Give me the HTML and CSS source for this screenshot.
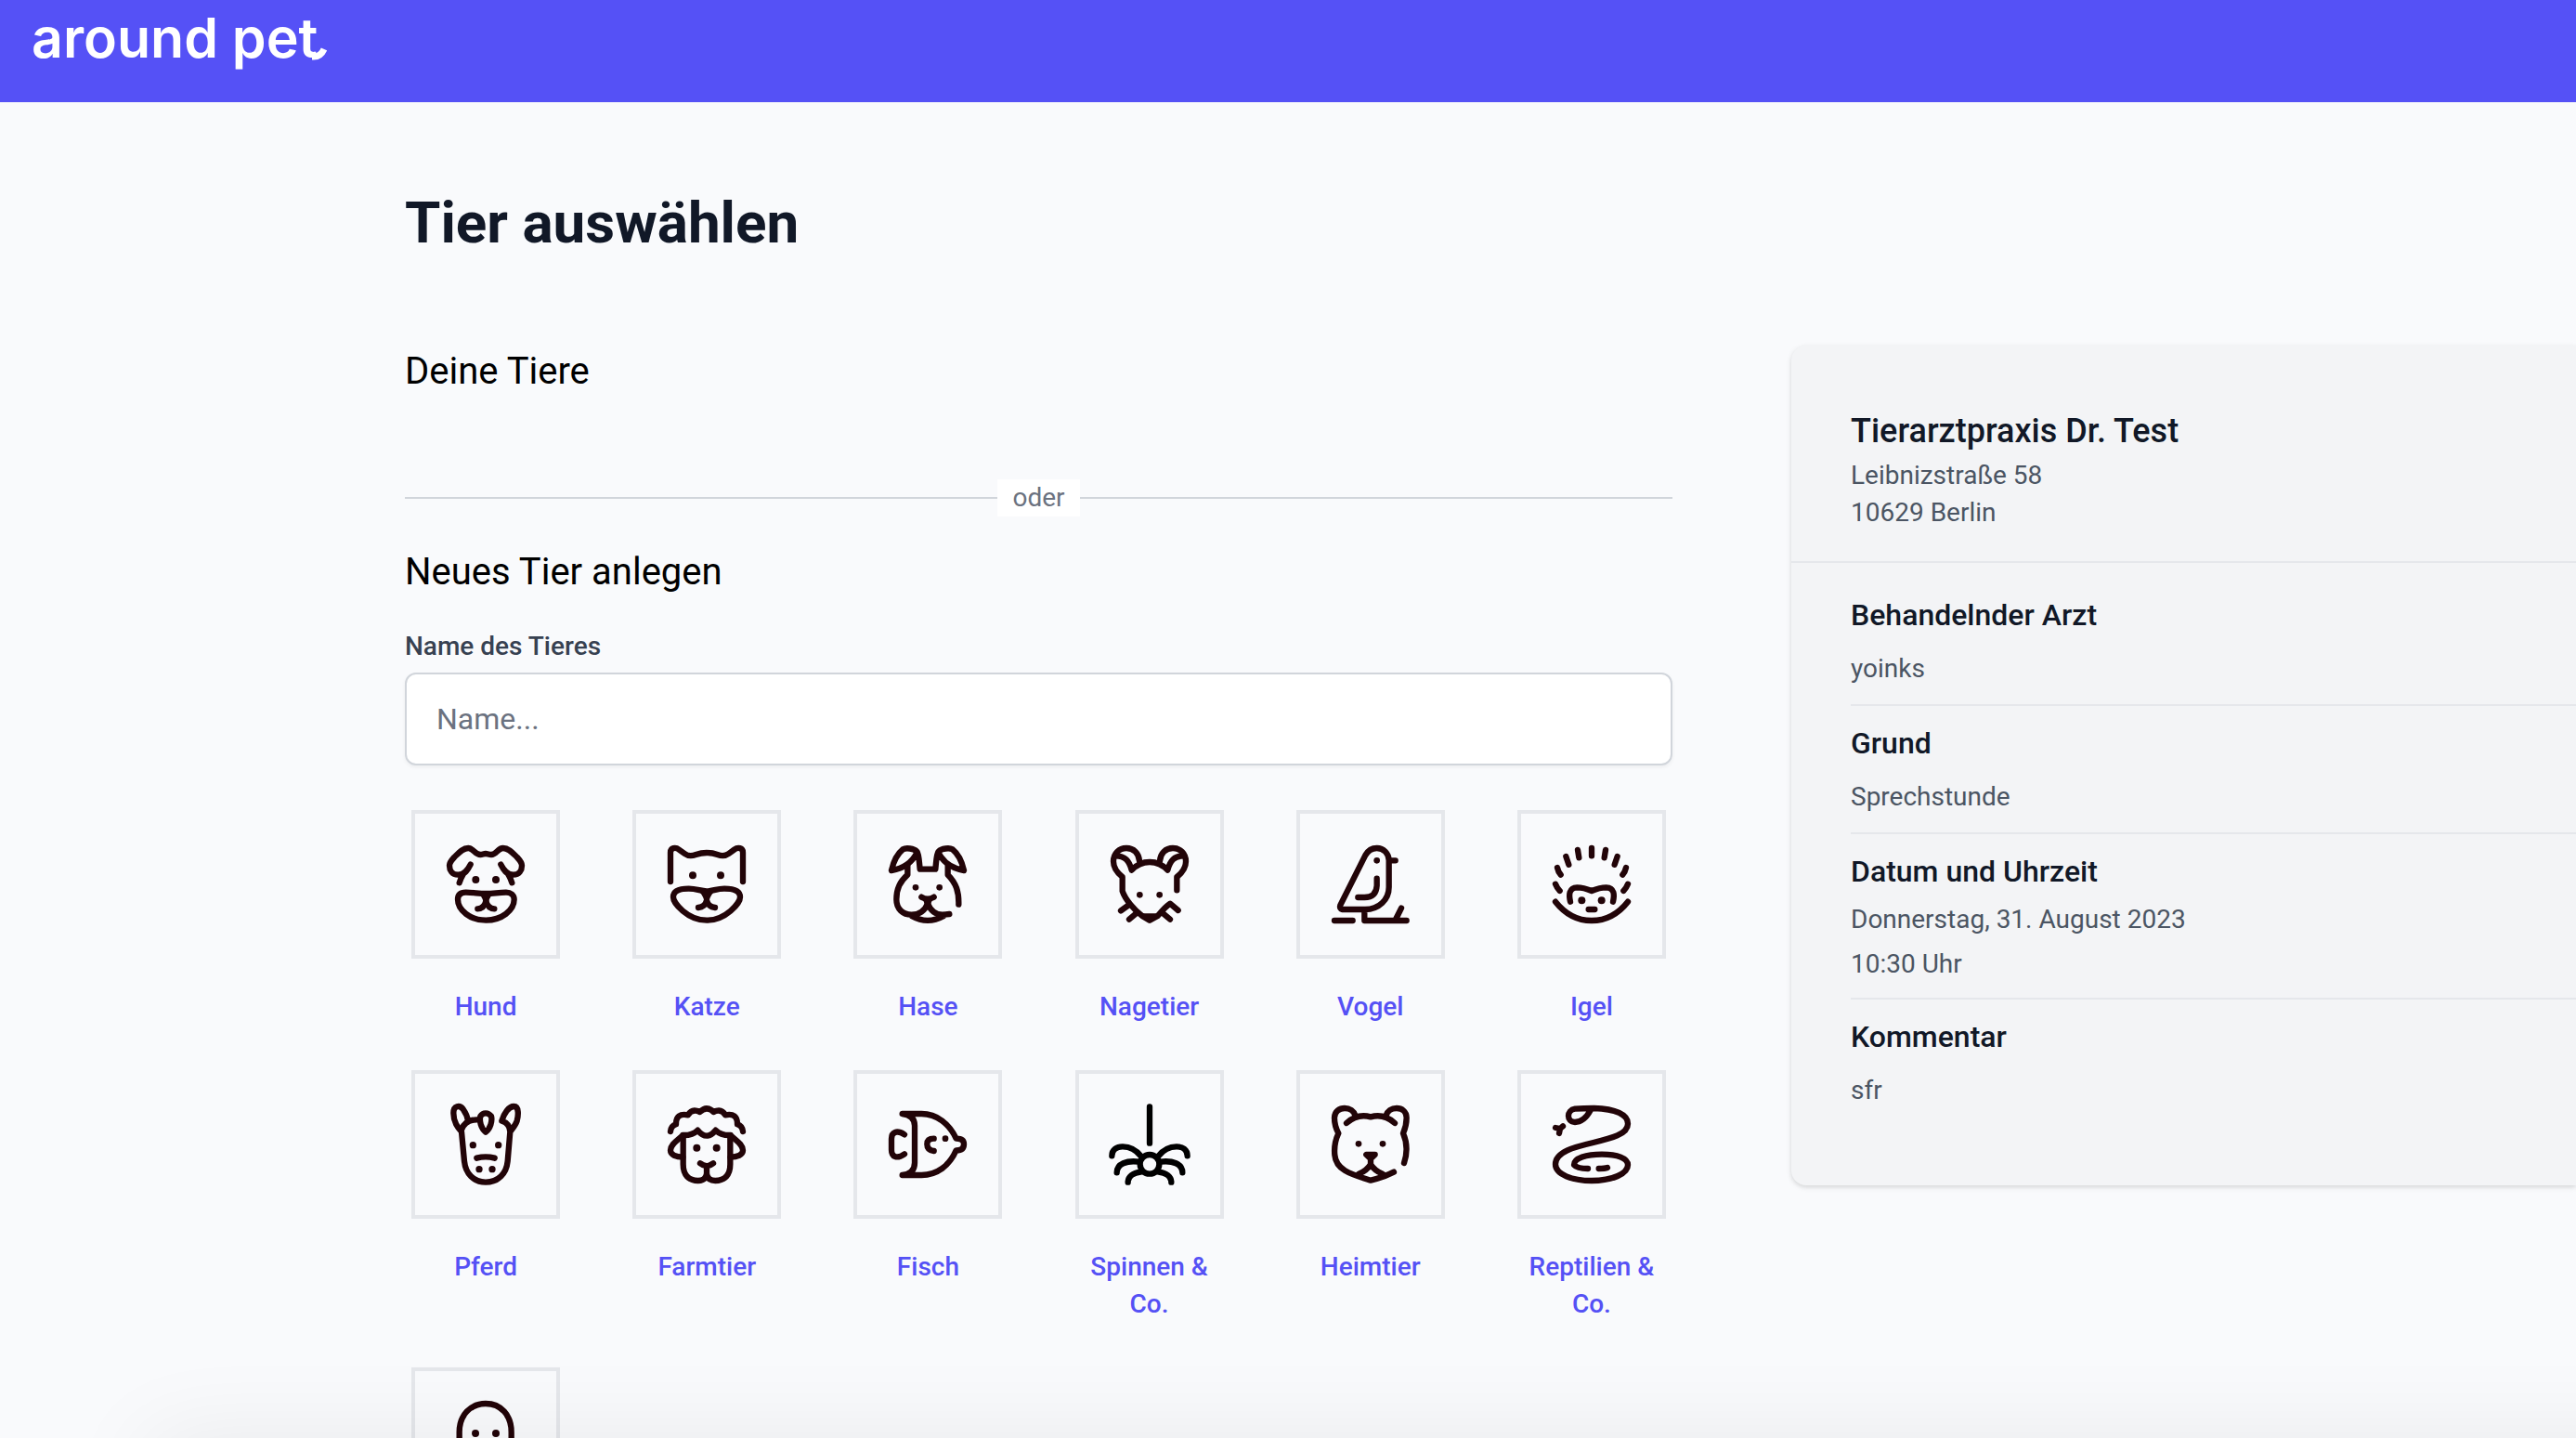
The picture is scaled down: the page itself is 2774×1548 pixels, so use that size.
FILE: index.html
```html
<!DOCTYPE html>
<html lang="de">
<head>
<meta charset="utf-8">
<meta name="viewport" content="width=device-width, initial-scale=1">
<title>Tier auswählen – around pet</title>
<link rel="stylesheet" href="styles.css">
</head>
<body>
<header class="topbar">
  <a class="logo" href="#">around pet<svg class="logo-tail" viewBox="0 0 16 24" aria-hidden="true"><path d="M0 19 Q9 20 13 11"/></svg></a>
</header>
<main class="page">
  <h1 class="page-title">Tier auswählen</h1>
  <div class="columns">
    <form class="selection">
      <h2 class="section-title">Deine Tiere</h2>
      <div class="divider"><span class="divider-text">oder</span></div>
      <h2 class="section-title">Neues Tier anlegen</h2>
      <label class="field-label" for="pet-name">Name des Tieres</label>
      <input class="field-input" id="pet-name" type="text" placeholder="Name...">
      <div class="animals">
        <button class="animal" type="button">
          <span class="tile"><svg viewBox="51 48 456 456" aria-hidden="true">
            <path d="M230 212C222 228 212 245 190 245C170 245 162 230 162 215C162 205 168 199 178 188C192 174 205 159 223 159C240 159 244 180 262 180C269 180 272 177 279 177C286 177 289 180 297 180C314 180 318 159 335 159C353 159 366 174 380 188C390 199 396 205 396 215C396 230 388 245 368 245C346 245 336 228 328 212M194 271Q198 258 205 246M364 271Q360 258 353 246"/>
            <path d="M189 325C189 308 200 302 215 302C240 302 255 306 280 306C305 306 320 302 345 302C360 302 371 310 371 325C371 360 330 392 280 392C230 392 189 360 189 325ZM253 355Q274 354 280 330Q286 354 307 355"/>
            <path class="solid" d="M250 304H310Q292 312 288 335H272Q268 312 250 304Z"/>
            <circle class="solid" cx="247" cy="261" r="12"/><circle class="solid" cx="312" cy="261" r="12"/>
          </svg></span>
          <span class="animal-name">Hund</span>
        </button>
        <button class="animal" type="button">
          <span class="tile"><svg viewBox="765 48 456 456" aria-hidden="true">
            <path d="M876 267V173C876 158 892 155 904 164L922 177Q937 188 958 180Q993 168 1028 180Q1049 188 1064 177L1082 164C1094 155 1110 158 1110 173V267"/>
            <path d="M885 317C885 300 900 290 935 290C960 290 975 298 993 298C1011 298 1026 290 1050 290C1085 290 1101 300 1101 317C1101 336 1055 392 993 392C931 392 885 336 885 317ZM966 351Q988 349 993 328Q998 349 1020 351"/>
            <path class="solid" d="M962 293H1024Q1006 308 1001 328H985Q980 308 962 293Z"/>
            <circle class="solid" cx="948" cy="247" r="12"/><circle class="solid" cx="1038" cy="247" r="12"/>
          </svg></span>
          <span class="animal-name">Katze</span>
        </button>
        <button class="animal" type="button">
          <span class="tile"><svg viewBox="42 48 456 456" aria-hidden="true">
            <path d="M153 231C160 200 175 175 190 163C200 157 225 160 235 170C242 178 242 200 245 227H295C298 200 298 178 305 170C315 160 340 157 350 163C365 175 380 200 387 231M153 231C190 225 220 205 236 172M387 231C350 225 320 205 304 172"/>
            <path d="M370 341C371 300 362 272 335 245V214M205 214V245C180 268 169 290 169 325C169 356 190 374 218 374C248 374 262 358 270 338C278 358 292 374 318 374L340 372M218 378Q270 407 322 378M250 317Q270 329 290 317"/>
            <path class="solid" d="M252 318H288L278 345H262Z"/>
            <circle class="solid" cx="231" cy="286" r="10"/><circle class="solid" cx="308" cy="286" r="10"/>
          </svg></span>
          <span class="animal-name">Hase</span>
        </button>
        <button class="animal" type="button">
          <span class="tile"><svg viewBox="756 48 456 456" aria-hidden="true">
            <path d="M951 200C949 175 932 159 909 159C885 159 867 177 867 202C867 220 878 238 896 252V298C905 325 935 360 960 378L984 392L1010 378C1025 360 1038 345 1050 338L1076 360M1072 295V252C1090 238 1101 220 1101 202C1101 177 1083 159 1059 159C1036 159 1019 175 1017 200"/>
            <path d="M874 184C905 184 918 200 926 230Q950 204 984 204Q1018 204 1042 230C1050 200 1063 184 1094 184M916 343L891 361M943 368L918 389M1025 368L1050 389"/>
            <path class="solid" d="M946 370H1022L984 401Z"/>
            <circle class="solid" cx="952" cy="310" r="10"/><circle class="solid" cx="1016" cy="310" r="10"/>
          </svg></span>
          <span class="animal-name">Nagetier</span>
        </button>
        <button class="animal" type="button">
          <span class="tile"><svg viewBox="60 48 456 456" aria-hidden="true">
            <path d="M270 357H196Q186 354 190 343L271 182C280 166 292 159 308 159C330 159 347 177 347 199V285C347 325 315 357 270 357ZM347 199H368M308 257V280Q306 318 268 318H247M268 357V393H404M171 393H230M387 353L370 387"/>
            <circle class="solid" cx="308" cy="199" r="10"/>
          </svg></span>
          <span class="animal-name">Vogel</span>
        </button>
        <button class="animal" type="button">
          <span class="tile"><svg viewBox="774 48 456 456" aria-hidden="true">
            <path d="M885 332C915 370 955 393 1002 393C1049 393 1089 370 1119 332M933 332C928 310 928 287 955 286C975 286 985 290 1002 297C1019 290 1029 286 1049 286C1076 287 1076 310 1071 332M992 357H1012M885 275Q890 288 899 297M891 222Q894 236 902 245M919 186L928 212M957 165L961 190M1002 159V184M1047 165L1043 190M1085 186L1076 212M1113 222Q1110 236 1102 245M1119 275Q1114 288 1105 297"/>
            <circle class="solid" cx="970" cy="328" r="12"/><circle class="solid" cx="1034" cy="328" r="12"/>
          </svg></span>
          <span class="animal-name">Igel</span>
        </button>
        <button class="animal" type="button">
          <span class="tile"><svg viewBox="51 48 456 456" aria-hidden="true">
            <path d="M331 200C338 175 354 153 370 153C388 153 384 185 380 200C375 215 365 225 358 235L350 330C346 370 320 398 279 398C240 398 214 370 210 330L201 235C190 222 175 205 175 175C175 150 195 148 206 162C215 175 220 185 222 200M201 228Q214 194 255 196M332 200Q357 208 358 235M279 236C264 225 258 200 262 185Q268 175 279 175Q290 175 297 185C301 200 294 225 279 236ZM250 320Q279 312 308 320"/>
            <circle class="solid" cx="238" cy="278" r="11"/><circle class="solid" cx="320" cy="278" r="11"/><circle class="solid" cx="258" cy="356" r="11"/><circle class="solid" cx="300" cy="356" r="11"/>
          </svg></span>
          <span class="animal-name">Pferd</span>
        </button>
        <button class="animal" type="button">
          <span class="tile"><svg viewBox="765 48 456 456" aria-hidden="true">
            <path d="M876 234Q878 216 894 211Q893 173 933 181Q945 159 971 171Q993 149 1015 171Q1041 159 1053 181Q1093 173 1092 211Q1108 216 1110 234M916 246Q947 247 964 230Q993 266 1022 230Q1039 247 1070 246M916 246C900 262 876 275 876 295C876 310 895 317 916 317M1070 246C1086 262 1110 275 1110 295C1110 310 1091 317 1070 317"/>
            <path d="M917 250V340C917 375 935 393 965 393Q990 393 993 370Q996 393 1021 393C1051 393 1069 375 1069 340V250M972 337Q993 354 1014 337M993 350V380"/>
            <circle class="solid" cx="961" cy="287" r="12"/><circle class="solid" cx="1025" cy="287" r="12"/>
          </svg></span>
          <span class="animal-name">Farmtier</span>
        </button>
        <button class="animal" type="button">
          <span class="tile"><svg viewBox="42 48 456 456" aria-hidden="true">
            <path d="M188 177H250C300 177 340 210 362 257Q387 257 387 275Q387 295 362 295C340 345 300 375 250 375H188Q228 370 228 335V215Q228 182 188 177ZM195 244C170 228 153 236 153 258V293C153 316 170 324 195 307M290 257Q268 257 268 275Q268 294 290 297"/>
            <circle class="solid" cx="327" cy="257" r="10"/>
          </svg></span>
          <span class="animal-name">Fisch</span>
        </button>
        <button class="animal" type="button">
          <span class="tile tile-black"><svg viewBox="756 48 456 456" aria-hidden="true">
            <path d="M984 154V272M862 313C862 272 925 275 955 313M1106 313C1106 272 1043 275 1013 313M878 367C878 338 910 327 950 332M1090 367C1090 338 1058 327 1018 332M914 398C914 380 930 368 955 365M1054 398C1054 380 1038 368 1013 365"/>
            <circle cx="984" cy="340" r="31"/>
          </svg></span>
          <span class="animal-name">Spinnen &amp; Co.</span>
        </button>
        <button class="animal" type="button">
          <span class="tile"><svg viewBox="60 48 456 456" aria-hidden="true">
            <path d="M396 336C408 300 406 270 393 240C402 220 404 205 404 190C404 169 388 159 372 159C355 159 342 168 338 182M238 182C234 168 221 159 204 159C188 159 171 169 171 190C171 205 173 220 184 240C170 270 170 290 172 310C176 360 228 373 288 392Q330 382 363 365M210 207Q245 175 288 187Q331 175 366 207M274 309H302L288 322ZM288 325V340Q276 360 250 371M288 340Q300 360 326 371"/>
            <circle class="solid" cx="249" cy="274" r="10"/><circle class="solid" cx="327" cy="274" r="10"/>
          </svg></span>
          <span class="animal-name">Heimtier</span>
        </button>
        <button class="animal" type="button">
          <span class="tile"><svg viewBox="774 48 456 456" aria-hidden="true">
            <path d="M998 166C986 188 970 204 948 204C920 204 920 165 948 161Q975 159 1010 159C1080 161 1119 180 1119 209C1119 280 885 260 885 340C885 373 940 393 1002 393C1070 393 1119 370 1119 342C1119 320 1085 308 1035 308C985 308 945 320 945 342Q955 354 990 354M1025 354Q1045 354 1053 351M885 222L900 225L909 217M900 225L897 240"/>
          </svg></span>
          <span class="animal-name">Reptilien &amp; Co.</span>
        </button>
        <button class="animal" type="button" aria-label="Andere">
          <span class="tile"><svg viewBox="51 48 456 456" aria-hidden="true">
            <path d="M194 392V245C194 190 230 153 279 153C328 153 362 190 362 245V392L320 370L279 392L236 370Z"/>
            <circle class="solid" cx="246" cy="249" r="12"/><circle class="solid" cx="312" cy="249" r="12"/>
          </svg></span>
        </button>
      </div>
    </form>
    <aside class="summary">
      <div class="practice">
        <h2 class="practice-name">Tierarztpraxis Dr. Test</h2>
        <p class="address">Leibnizstraße 58<br>10629 Berlin</p>
      </div>
      <dl class="details">
        <div class="detail"><dt>Behandelnder Arzt</dt><dd>yoinks</dd></div>
        <div class="detail"><dt>Grund</dt><dd>Sprechstunde</dd></div>
        <div class="detail detail-date"><dt>Datum und Uhrzeit</dt><dd>Donnerstag, 31. August 2023</dd><dd>10:30 Uhr</dd></div>
        <div class="detail"><dt>Kommentar</dt><dd>sfr</dd></div>
      </dl>
    </aside>
  </div>
</main>
<div class="bottom-shade"></div>
</body>
</html>
```

FILE: styles.css
```css
* {
  box-sizing: border-box;
}

html {
  height: 100%;
  overflow: hidden;
}

body {
  margin: 0;
  height: 100%;
  overflow: hidden;
  background: #f9fafc;
  color: #000;
  font-family: Roboto, "Liberation Sans", sans-serif;
  font-size: 28px;
  line-height: 40px;
}

h1, h2, p, dl, dt, dd {
  margin: 0;
  font-weight: 400;
}

.topbar {
  height: 110px;
  padding: 4px 34px;
  background: #5551f6;
}

.logo {
  display: inline-flex;
  align-items: flex-end;
  color: #fff;
  font-family: Inter, sans-serif;
  font-size: 59px;
  font-weight: 600;
  line-height: 74px;
  text-decoration: none;
}

.logo-tail {
  width: 16px;
  height: 24px;
  margin: 0 0 12px -6px;
  fill: none;
  stroke: #fff;
  stroke-width: 7;
}

.page {
  padding: 94px 0 0 436px;
}

.page-title {
  margin-bottom: 96px;
  color: #111827;
  font-size: 62px;
  font-weight: 700;
  line-height: 72px;
}

.columns {
  display: grid;
  grid-template-columns: minmax(0, 1365fr) minmax(0, 845fr);
  column-gap: 128px;
  align-items: start;
}

.section-title {
  font-size: 40px;
  line-height: 56px;
}

.divider {
  display: flex;
  align-items: center;
  margin: 88px 0 32px;
  color: #6b7280;
}

.divider::before,
.divider::after {
  content: "";
  flex: 1;
  height: 2px;
  background: #d1d5db;
}

.divider-text {
  padding: 0 16px;
  background: #fff;
}

.field-label {
  display: block;
  margin: 32px 0 8px;
  color: #374151;
  font-weight: 500;
}

.field-input {
  display: block;
  width: 100%;
  height: 100px;
  padding: 0 32px;
  border: 2px solid #d1d5db;
  border-radius: 12px;
  background: #fff;
  box-shadow: 0 2px 4px rgba(0, 0, 0, 0.05);
  color: #111827;
  font: inherit;
  font-size: 32px;
}

.field-input::placeholder {
  color: #6b7280;
  opacity: 1;
}

.animals {
  display: grid;
  grid-template-columns: repeat(6, minmax(0, 1fr));
  gap: 48px 64px;
  margin-top: 48px;
}

.animal {
  display: flex;
  flex-direction: column;
  align-items: center;
  gap: 32px;
  padding: 0;
  border: 0;
  background: none;
  color: #5551f5;
  font: inherit;
  font-weight: 500;
  cursor: pointer;
}

.tile {
  width: 160px;
  height: 160px;
  border: 4px solid #e5e7eb;
  color: #220408;
}

.tile-black {
  color: #000;
}

.tile svg {
  display: block;
  width: 100%;
  height: 100%;
  fill: none;
  stroke: currentColor;
  stroke-width: 19;
  stroke-linecap: round;
  stroke-linejoin: round;
}

.tile .solid {
  fill: currentColor;
  stroke: none;
}

.summary {
  padding-bottom: 64px;
  border-radius: 16px 0 0 16px;
  background: #f3f4f6;
  box-shadow: 0 2px 6px rgba(0, 0, 0, 0.1), 0 2px 4px rgba(0, 0, 0, 0.06);
}

.practice {
  padding: 64px 64px 32px;
  border-bottom: 2px solid #e5e7eb;
}

.practice-name {
  color: #111827;
  font-size: 36px;
  font-weight: 500;
  line-height: 56px;
}

.address {
  color: #4b5563;
}

.details {
  padding: 16px 0 0 64px;
}

.detail {
  padding: 16px 0 14px;
}

.detail + .detail {
  border-top: 2px solid #e5e7eb;
}

.detail dt {
  margin-bottom: 10px;
  color: #111827;
  font-size: 32px;
  font-weight: 500;
  line-height: 48px;
}

.detail dd {
  color: #4b5563;
  line-height: 48px;
}

.detail-date {
  padding-bottom: 12px;
}

.detail-date dt {
  margin-bottom: 4px;
}

.bottom-shade {
  position: fixed;
  top: 100%;
  left: 160px;
  right: -160px;
  height: 100px;
  box-shadow: 0 0 100px rgba(0, 0, 0, 0.07);
}
```
